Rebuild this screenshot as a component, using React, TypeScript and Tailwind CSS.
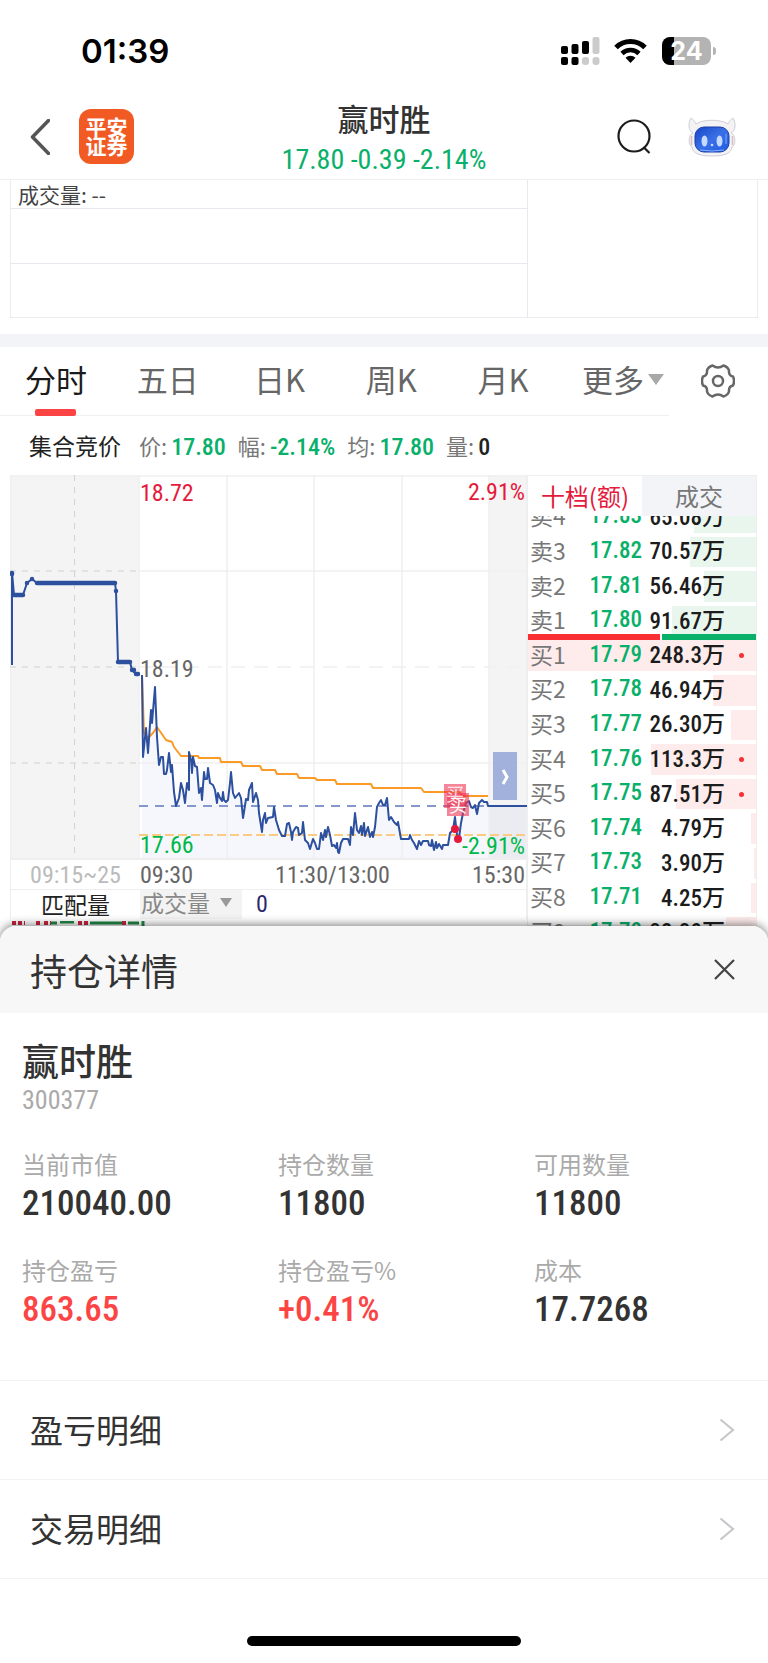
import clsx from "clsx";

const NUM = "font-['Roboto_Condensed','Roboto','Noto_Sans_CJK_SC',sans-serif]";

const PERIODS = ["分时", "五日", "日K", "周K", "月K"];

interface Quote {
  label: string;
  price: string;
  amount: string;
  bar: number; // width of the depth bar, % of the panel
  dot?: boolean;
}

const QUOTES: Quote[] = [
  { label: "卖4", price: "17.83", amount: "65.08万", bar: 27 },
  { label: "卖3", price: "17.82", amount: "70.57万", bar: 29 },
  { label: "卖2", price: "17.81", amount: "56.46万", bar: 23 },
  { label: "卖1", price: "17.80", amount: "91.67万", bar: 37 },
  { label: "买1", price: "17.79", amount: "248.3万", bar: 100, dot: true },
  { label: "买2", price: "17.78", amount: "46.94万", bar: 19 },
  { label: "买3", price: "17.77", amount: "26.30万", bar: 11 },
  { label: "买4", price: "17.76", amount: "113.3万", bar: 46, dot: true },
  { label: "买5", price: "17.75", amount: "87.51万", bar: 35, dot: true },
  { label: "买6", price: "17.74", amount: "4.79万", bar: 2 },
  { label: "买7", price: "17.73", amount: "3.90万", bar: 1 },
  { label: "买8", price: "17.71", amount: "4.25万", bar: 2 },
  { label: "买9", price: "17.70", amount: "32.30万", bar: 13 },
];

const SUMMARY = [
  { label: "价:", value: "17.80", green: true },
  { label: "幅:", value: "-2.14%", green: true },
  { label: "均:", value: "17.80", green: true },
  { label: "量:", value: "0", green: false },
];

const POSITION = [
  { label: "当前市值", value: "210040.00" },
  { label: "持仓数量", value: "11800" },
  { label: "可用数量", value: "11800" },
  { label: "持仓盈亏", value: "863.65", gain: true },
  { label: "持仓盈亏%", value: "+0.41%", gain: true },
  { label: "成本", value: "17.7268" },
];

const AUCTION_LINE =
  "2,190 2,97 4,120 13,120 17,108 22,104 27,108 105,108 106,116 108,187 120,187 122,195 126,199 128,199";

const PRICE_LINE =
  "132,200 133,282 136,253 138,278 141,235 142,248 145,212 147,262 149,290 151,282 153,282 154,299 156,299 157,295 159,278 161,297 162,290 164,317 166,331 169,323 171,308 173,315 175,328 177,308 179,315 179,277 181,285 182,298 183,282 185,291 187,292 189,318 191,313 192,325 194,297 195,304 197,304 198,293 200,308 203,310 205,315 207,328 208,318 210,323 212,326 213,317 214,325 216,327 218,325 220,308 221,297 223,318 225,323 229,318 231,323 233,343 234,337 236,324 238,325 239,315 242,308 243,327 246,318 248,325 249,338 252,357 253,345 255,338 256,348 258,343 263,342 264,332 266,345 269,355 272,361 275,361 277,349 279,348 281,357 282,365 283,357 286,352 288,353 289,360 292,358 293,347 295,365 298,368 300,374 303,364 305,368 307,374 309,374 311,358 313,365 315,355 316,362 318,352 320,360 322,371 324,370 326,373 327,368 328,377 329,378 331,368 333,364 338,364 340,370 341,352 343,360 345,338 347,355 349,358 351,351 352,360 354,348 355,361 358,352 360,362 362,357 363,362 365,352 367,332 369,328 371,325 373,330 375,330 377,323 379,345 381,342 384,347 387,350 388,347 391,364 399,364 400,360 402,365 404,368 407,374 409,366 411,370 413,366 418,366 419,370 421,371 422,365 424,375 426,367 427,373 429,369 432,374 433,370 438,370 440,358 443,355 445,342 447,360 449,363 451,348 453,338 456,328 459,326 461,332 463,333 465,330 467,339 469,328 472,325 474,327 477,327 478,331 517,331";

const AVERAGE_LINE =
  "132,200 134,258 137,262 139,262 143,258 147,252 156,265 162,267 164,272 171,281 188,281 189,283 210,283 211,287 231,287 233,291 250,291 252,295 265,295 267,299 287,299 289,303 305,303 307,305 325,305 327,309 361,309 363,313 411,313 414,317 450,317 452,321 478,321";

function StatusBar() {
  return (
    <div className="flex h-[94px] items-center justify-between pt-2 pr-[52px] pl-[81px]">
      <span className="font-['Inter',sans-serif] text-[33px] leading-10 font-semibold text-black">
        01:39
      </span>
      <div className="flex items-center">
        <svg className="h-7 w-[39px]" viewBox="0 0 39 28">
          <g fill="#000">
            <rect x="0" y="9" width="7" height="8" rx="2" />
            <rect x="10.5" y="7" width="7" height="10" rx="2" />
            <rect x="21" y="4" width="7" height="13" rx="2" />
            <rect x="0" y="20" width="7" height="8" rx="2" />
            <rect x="10.5" y="20" width="7" height="8" rx="2" />
          </g>
          <g fill="#cbcbcb">
            <rect x="31.5" y="0" width="7" height="17" rx="2" />
            <rect x="21" y="20" width="7" height="8" rx="3" />
            <rect x="31.5" y="20" width="7" height="8" rx="3" />
          </g>
        </svg>
        <svg className="ml-[14px] h-7 w-[33px]" viewBox="0 0 33 28" fill="none" stroke="#000">
          <path d="M2 10.5a20.5 20.5 0 0 1 29 0" strokeWidth="5" />
          <path d="M8 16.5a12.2 12.2 0 0 1 17 0" strokeWidth="4.6" />
          <path d="M16.5 26l-5-5.2a7.2 7.2 0 0 1 10 0z" fill="#000" stroke="none" />
        </svg>
        <div className="ml-[15px] flex h-7 w-[49px] items-center justify-center rounded-lg bg-linear-to-r from-black from-25% to-[#b3b3b3] to-25% font-['Inter',sans-serif] text-[25px] leading-7 font-bold text-white">
          24
        </div>
        <span className="ml-0.5 h-2 w-[3px] rounded-r-full bg-[#b3b3b3]" />
      </div>
    </div>
  );
}

function RobotIcon() {
  return (
    <svg className="h-10 w-12" viewBox="0 0 48 40">
      <defs>
        <linearGradient id="face" x1="0" y1="0" x2="1" y2="1">
          <stop offset="0" stopColor="#1546c8" />
          <stop offset="0.5" stopColor="#3a70e6" />
          <stop offset="1" stopColor="#1f5be6" />
        </linearGradient>
      </defs>
      <path
        d="M3 1C0 6 0 13 5 16c-5 2-5 12-1 14 1 7 8 9 20 9s19-2 20-9c4-2 4-12-1-14 5-3 5-10 2-15-2 1-4 4-5 6C33 2 15 2 8 7 7 5 5 2 3 1z"
        fill="#f3f3f6"
        stroke="#cfcfd6"
      />
      <path d="M3.500 19v9M44.500 19v9" stroke="#dcbcc4" strokeWidth="1.5" />
      <rect x="7" y="10" width="34" height="25" rx="9" fill="url(#face)" stroke="#1b3fa8" />
      <path d="M12 33q12 2 24 0" stroke="#86b1ff" fill="none" />
      <path d="M38 17v10" stroke="#7ea8ff" />
      <ellipse cx="16.500" cy="24" rx="3" ry="5.500" fill="#c4dbff" />
      <ellipse cx="31.500" cy="24" rx="3" ry="5.500" fill="#c4dbff" />
      <circle cx="24" cy="28" r="1.300" fill="#c4dbff" />
    </svg>
  );
}

function Header() {
  return (
    <header className="grid h-[86px] grid-cols-[1fr_auto_1fr] items-center border-b border-[#eeeeee] px-[30px]">
      <div className="flex items-center">
        <button type="button" aria-label="返回">
          <svg className="h-9 w-5" viewBox="0 0 20 36" fill="none" stroke="#555" strokeWidth="3.5">
            <path d="M18.500 1.500L2.500 18l16 16.500" strokeLinecap="round" strokeLinejoin="round" />
          </svg>
        </button>
        <a
          href="#"
          className="ml-[29px] flex size-[55px] flex-col items-center justify-center rounded-xl bg-[#f15a22] pb-0.5 text-[21px] leading-[19px] font-bold text-white"
        >
          <span>平安</span>
          <span>证券</span>
        </a>
      </div>
      <div className="flex flex-col items-center pt-0.5">
        <h1 className="text-[31px] leading-[41px] font-medium text-[#333]">赢时胜</h1>
        <p className={clsx(NUM, "pt-1 text-[28px] leading-9 text-[#08b06a]")}>17.80 -0.39 -2.14%</p>
      </div>
      <div className="flex items-center justify-end gap-[37px] pr-0.5">
        <button type="button" aria-label="搜索">
          <svg className="h-9 w-[34px]" viewBox="0 0 34 36" fill="none" stroke="#1c1c1c" strokeWidth="2.2">
            <circle cx="17" cy="17" r="15.500" />
            <path d="M26.500 28l6 6" />
          </svg>
        </button>
        <button type="button" aria-label="助手">
          <RobotIcon />
        </button>
      </div>
    </header>
  );
}

function VolumeBox() {
  return (
    <section className="mx-[10px] mb-4 flex border border-t-0 border-[#ececf1]">
      <div className="flex-1 border-r border-[#e8e8ef]">
        <p className="h-[29px] border-b border-[#e8e8ef] pl-[7px] text-[21px] leading-7 text-[#444]">
          成交量: --
        </p>
        <div className="h-[55px] border-b border-[#e8e8ef]" />
        <div className="h-[53px]" />
      </div>
      <div className="w-[229px]" />
    </section>
  );
}

function GearIcon() {
  return (
    <svg className="size-[34px]" viewBox="0 0 34 34" fill="none" stroke="#666" strokeWidth="2.500">
      <path
        d="M11.500 1.500Q17 5.500 22.500 1.500Q27 3 28 6.500Q27.500 11.500 32 12.500Q34 17 32 21.500Q27.500 22.500 28 27.500Q27 31 22.500 32.500Q17 28.500 11.500 32.500Q7 31 6 27.500Q6.500 22.500 2 21.500Q0 17 2 12.500Q6.500 11.500 6 6.500Q7 3 11.500 1.500Z"
        strokeLinejoin="round"
      />
      <circle cx="17" cy="17" r="5" />
    </svg>
  );
}

function PeriodTabs() {
  return (
    <nav className="flex h-[69px] items-start">
      <div className="flex h-full flex-1 border-b border-[#f0f0f0] pr-[5px]">
        {PERIODS.map((name, i) => (
          <button
            key={name}
            type="button"
            className={clsx(
              "flex flex-1 flex-col items-center text-[31px] leading-[64px]",
              i === 0 ? "text-[#1a1a1a]" : "text-[#666]"
            )}
          >
            {name}
            {i === 0 && <span className="-mt-0.5 h-[7px] w-[41px] shrink-0 rounded-xs bg-[#fc4445]" />}
          </button>
        ))}
        <button type="button" className="flex h-16 w-[105px] items-center justify-end gap-1 text-[31px] leading-[64px] whitespace-nowrap text-[#666]">
          更多
          <svg className="h-[11px] w-4 shrink-0" viewBox="0 0 16 11" fill="#a8a8a8">
            <path d="M0 0h16L8 11z" />
          </svg>
        </button>
      </div>
      <button type="button" aria-label="设置" className="flex h-[68px] w-[99px] items-center justify-center pr-0.5">
        <GearIcon />
      </button>
    </nav>
  );
}

function SummaryLine() {
  return (
    <div className="flex h-[59px] items-center pl-[29px] text-[22px]">
      <span className="mr-[18px] text-[23px] text-[#222]">集合竞价</span>
      {SUMMARY.map((s) => (
        <span key={s.label} className="mr-3 flex items-center text-[#777]">
          {s.label}
          <b className={clsx(NUM, "ml-1 pt-0.5 text-[24px] font-medium", s.green ? "text-[#08b06a]" : "text-[#222]")}>
            {s.value}
          </b>
        </span>
      ))}
    </div>
  );
}

function PriceChart() {
  return (
    <svg className="block w-full" viewBox="0 0 517 384">
      <rect width="129" height="384" fill="#f4f4f4" />
      <rect x="479" width="38" height="384" fill="#f4f4f4" />
      <polygon points={`${PRICE_LINE} 517,384 132,384`} fill="#5070c8" fillOpacity="0.06" />

      <g stroke="#efeff1" strokeWidth="1.500">
        <path d="M0 1h517M129 96h388M129 288h388M0 383.500h517M0.500 0v384M129 0v384M217 0v384M304 0v384M392 0v384M479 0v384M516.500 0v384" />
        <path d="M129 192h388" strokeDasharray="14 9" />
      </g>
      <path d="M0 96h129M0 192h129M0 288h129M64.500 0v384" stroke="#d2d2d2" strokeDasharray="6 6" />
      <path d="M129 331h388" stroke="#8598cc" strokeWidth="2" strokeDasharray="9 7" />
      <path d="M129 360h388" stroke="#fbcb83" strokeWidth="2" strokeDasharray="9 4" />

      <g fill="none" strokeWidth="2" strokeLinejoin="round">
        <polyline points={AUCTION_LINE} stroke="#2c4f9e" />
        <path
          d="M4 120h9M27 108h78M108 187h12M122 195h2M126 199h2M2 98v1M17 108v.1M22 104v.1M106 116v.1"
          stroke="#2c4f9e"
          strokeWidth="4.500"
          strokeLinecap="round"
        />
        <polyline points={AVERAGE_LINE} stroke="#fb9a26" />
        <polyline points={PRICE_LINE} stroke="#2c4f9e" />
      </g>

      <g className={NUM} fontSize="24">
        <text x="130" y="26" fill="#e5193c">18.72</text>
        <text x="130" y="202" fill="#666">18.19</text>
        <text x="130" y="378" fill="#00b84a">17.66</text>
        <text x="515" y="25" fill="#e5193c" textAnchor="end">2.91%</text>
        <text x="515" y="379" fill="#00b84a" textAnchor="end">-2.91%</text>
      </g>

      <g fill="#ee3355" fillOpacity="0.6">
        <rect x="434" y="309" width="22" height="24" />
        <rect x="437" y="318" width="22" height="23" />
      </g>
      <g fill="#fff" fontSize="18" textAnchor="middle">
        <text x="445" y="326" fillOpacity="0.8">买</text>
        <text x="448" y="337">买</text>
      </g>
      <circle cx="445" cy="354" r="4" fill="#e5193c" />
      <circle cx="448" cy="364" r="4" fill="#e5193c" />

      <rect x="483" y="277" width="24" height="48" fill="#a1b1dc" />
      <path d="M493 295l4 7-4 7" fill="none" stroke="#fff" strokeWidth="3" />
    </svg>
  );
}

function ChartPanel() {
  return (
    <div className="min-w-0 flex-1">
      <PriceChart />
      <div
        className={clsx(
          NUM,
          "flex h-[31px] items-center justify-between border border-[#eeeeee] pr-px text-[24px] leading-[30px] text-[#666]"
        )}
      >
        <span className="w-[129px] text-center text-[#bbb]">09:15~25</span>
        <span>09:30</span>
        <span className="flex-1 text-center">11:30/13:00</span>
        <span>15:30</span>
      </div>
      <div className="flex h-[29px] border-x border-[#eeeeee] text-[23px] leading-[29px]">
        <span className="w-[129px] text-center text-[#222]">匹配量</span>
        <button type="button" className="flex w-[102px] items-center justify-between bg-[#f3f3f3] pr-[10px] pb-1 pl-px leading-[25px] text-[#888]">
          成交量
          <svg className="h-[9px] w-3" viewBox="0 0 12 9" fill="#999">
            <path d="M0 0h12L6 9z" />
          </svg>
        </button>
        <span className={clsx(NUM, "pl-[14px] text-[24px] leading-7 text-[#2e2a6b]")}>0</span>
      </div>
      <svg className="mt-0.5 block h-[6px] w-full" viewBox="0 0 517 6" preserveAspectRatio="xMinYMin slice">
        <path d="M2 2h13M26 2h4M34 2h7M68 2h10M112 2h6" stroke="#c9243f" strokeWidth="4" strokeDasharray="4 2" />
        <path d="M41 2h6M50 1h14M80 2h32M118 2h11M133 0v6" stroke="#1f8a45" strokeWidth="3" />
      </svg>
    </div>
  );
}

function OrderBook() {
  return (
    <div className="w-[230px] border border-[#eeeeee]">
      <div className="relative z-10 flex h-10 bg-white text-[24px] leading-10">
        <button type="button" className="flex-1 text-[#e5193c]">
          十档(额)
        </button>
        <button type="button" className="flex-1 bg-[#f2f4f8] text-[#777]">
          成交
        </button>
      </div>
      <table className="-mt-4 h-[450px] w-full">
        <tbody>
          {QUOTES.map((q) => {
            const sell = q.label.startsWith("卖");
            return (
              <tr key={q.label} className="relative">
                <td className="w-[50px] p-0 pb-1 pl-[2px] text-[23px] leading-6 whitespace-nowrap text-[#777]">
                  <span
                    className={clsx("absolute inset-y-0.5 right-0", sell ? "bg-[#e8f6ee]" : "bg-[#feecec]")}
                    style={{ width: `${q.bar}%` }}
                  />
                  <span className="relative">{q.label}</span>
                  {q.label === "卖1" && (
                    <span className="absolute inset-x-0 -bottom-0.5 z-10 flex h-1.5 gap-0.5">
                      <span className="w-[58%] bg-[#f92f33]" />
                      <span className="flex-1 bg-[#08b06a]" />
                    </span>
                  )}
                </td>
                <td className={clsx(NUM, "p-0 pb-0.5 text-right text-[23px] leading-6 font-medium text-[#08b06a]")}>
                  <span className="relative">{q.price}</span>
                </td>
                <td className="w-[83px] p-0 pb-0.5 text-right text-[23px] leading-6 font-medium whitespace-nowrap text-[#1c1c1c]">
                  <span className="relative">
                    <span className={NUM}>{q.amount.slice(0, -1)}</span>万
                  </span>
                </td>
                <td className="w-[31px] p-0">
                  {q.dot && <span className="relative ml-[14px] block size-[5px] rounded-full bg-[#f92f33]" />}
                </td>
              </tr>
            );
          })}
        </tbody>
      </table>
    </div>
  );
}

function DetailLink({ children }: { children: string }) {
  return (
    <a
      href="#"
      className="flex h-[99px] items-center justify-between border-b border-[#f3f3f3] pr-[33px] pl-[30px] text-[33px] text-[#333]"
    >
      {children}
      <svg className="h-6 w-4" viewBox="0 0 16 24" fill="none" stroke="#c8c8cc" strokeWidth="2.2">
        <path d="M1.500 1.500L14 12 1.500 22.500" />
      </svg>
    </a>
  );
}

function PositionSheet() {
  return (
    <section className="relative z-20 rounded-t-[16px] bg-white shadow-[0_-2px_8px_rgba(0,0,0,0.45)]">
      <div className="flex h-[87px] items-center justify-between rounded-t-[16px] bg-[#f7f7f7] pr-[33px] pl-[30px]">
        <h2 className="text-[37px] leading-[54px] text-[#333]">持仓详情</h2>
        <button type="button" aria-label="关闭">
          <svg className="size-[21px]" viewBox="0 0 21 21" stroke="#444" strokeWidth="2.200">
            <path d="M1 1l19 19M20 1L1 20" />
          </svg>
        </button>
      </div>
      <div className="px-[22px] pt-5">
        <h3 className="text-[37px] leading-[54px] font-medium text-[#333]">赢时胜</h3>
        <p className={clsx(NUM, "text-[26px] leading-[26px] text-[#aaa]")}>300377</p>
      </div>
      <dl className="grid grid-cols-3 gap-y-[26px] pt-[33px] pb-12">
        {POSITION.map((p) => (
          <div key={p.label} className="pl-[22px]">
            <dt className="text-[24px] leading-9 text-[#aaa]">{p.label}</dt>
            <dd className={clsx(NUM, "text-[35px] leading-[44px] font-medium", p.gain ? "text-[#fc4445]" : "text-[#333]")}>
              {p.value}
            </dd>
          </div>
        ))}
      </dl>
      <div className="border-t border-[#f3f3f3]">
        <DetailLink>盈亏明细</DetailLink>
        <DetailLink>交易明细</DetailLink>
      </div>
      <div className="flex h-[84px] items-end justify-center pb-[17px]">
        <span className="h-[10px] w-[274px] rounded-full bg-black" />
      </div>
    </section>
  );
}

export default function App() {
  return (
    <main className="w-full overflow-hidden bg-white font-['Noto_Sans_CJK_SC',sans-serif]">
      <StatusBar />
      <Header />
      <VolumeBox />
      <div className="h-[13px] bg-[#f2f4f8]" />
      <PeriodTabs />
      <SummaryLine />
      <section className="flex h-[451px] overflow-hidden pr-[11px] pl-[10px]">
        <ChartPanel />
        <OrderBook />
      </section>
      <PositionSheet />
    </main>
  );
}
